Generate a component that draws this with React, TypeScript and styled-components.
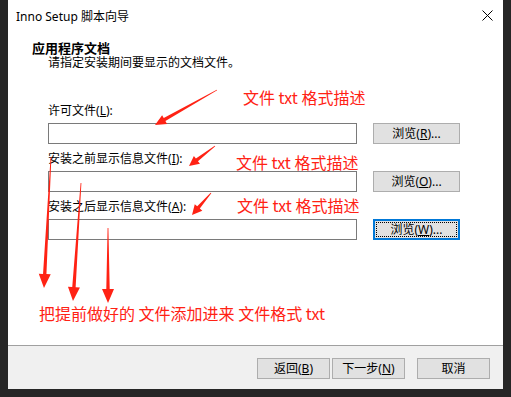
import styled, { createGlobalStyle } from "styled-components";

const GlobalStyle = createGlobalStyle`
	html, body {
		margin: 0;
		height: 100%;
		background: #262626;
	}
	body {
		font-family: "Noto Sans", "Noto Sans CJK SC", sans-serif;
		font-size: 12px;
		color: #000;
	}
`;

const RED = "#ff2214";

interface Arrow {
	from: [number, number];
	to: [number, number];
	head: number;
	half: number;
}

// coordinates are relative to the dialog window
const arrows: Arrow[] = [
	{ from: [209, 90], to: [147, 125], head: 11, half: 5 },
	{ from: [207, 146], to: [181, 166], head: 10, half: 5 },
	{ from: [203, 193], to: [184, 215], head: 10, half: 5 },
	{ from: [43, 157], to: [36, 288], head: 14, half: 6 },
	{ from: [73, 183], to: [65, 301], head: 14, half: 6 },
	{ from: [100, 228], to: [100, 303], head: 14, half: 6 },
];

const arrowPoints = ({ from, to, head, half }: Arrow) => {
	const dx = to[0] - from[0];
	const dy = to[1] - from[1];
	const len = Math.hypot(dx, dy);
	const ux = dx / len;
	const uy = dy / len;
	const nx = -uy;
	const ny = ux;
	const bx = to[0] - ux * head;
	const by = to[1] - uy * head;
	const pts = [
		[from[0] + nx * 0.4, from[1] + ny * 0.4],
		[bx + nx * 1.7, by + ny * 1.7],
		[bx + nx * half, by + ny * half],
		[to[0], to[1]],
		[bx - nx * half, by - ny * half],
		[bx - nx * 1.7, by - ny * 1.7],
		[from[0] - nx * 0.4, from[1] - ny * 0.4],
	];
	return pts.map((p) => p.join(",")).join(" ");
};

const fields = [
	{ label: "许可文件", key: "L", browse: "R", focused: false },
	{ label: "安装之前显示信息文件", key: "I", browse: "O", focused: false },
	{ label: "安装之后显示信息文件", key: "A", browse: "W", focused: true },
];

const notes = [
	{ x: 235, y: 87 },
	{ x: 228, y: 152 },
	{ x: 229, y: 195 },
];

const App: React.FC = () => {
	return (
		<>
			<GlobalStyle />
			<Window>
				<TitleBar>
					<span>Inno Setup 脚本向导</span>
					<Close width="11" height="11" viewBox="0 0 11 11">
						<path d="M0.5 0.5 L10.5 10.5 M10.5 0.5 L0.5 10.5" stroke="#000" strokeWidth="1" />
					</Close>
				</TitleBar>
				<Header>
					<HeaderTitle>应用程序文档</HeaderTitle>
					<HeaderSub>请指定安装期间要显示的文档文件。</HeaderSub>
				</Header>
				<Content>
					{fields.map((f) => (
						<FieldGroup key={f.key}>
							<Label>
								{f.label}(<u>{f.key}</u>):
							</Label>
							<FieldRow>
								<TextBox />
								<Button $wide $focused={f.focused}>
									<ButtonInner $focused={f.focused}>
										浏览(<u>{f.browse}</u>)...
									</ButtonInner>
								</Button>
							</FieldRow>
						</FieldGroup>
					))}
				</Content>
				<Footer>
					<Button>
						返回(<u>B</u>)
					</Button>
					<Button>
						下一步(<u>N</u>)
					</Button>
					<Button $gapLeft>取消</Button>
				</Footer>

				{notes.map((n, i) => (
					<Note key={i} style={{ left: n.x, top: n.y }}>
						文件 txt 格式描述
					</Note>
				))}
				<Note style={{ left: 31, top: 303 }}>把提前做好的 文件添加进来 文件格式 txt</Note>
				<Overlay width="495" height="389">
					{arrows.map((a, i) => (
						<polygon key={i} points={arrowPoints(a)} fill={RED} />
					))}
				</Overlay>
			</Window>
		</>
	);
};

const Window = styled.div`
	position: relative;
	margin-left: 8px;
	width: 495px;
	height: 389px;
	background: #fff;
	display: flex;
	flex-direction: column;
	overflow: hidden;
`;

const TitleBar = styled.div`
	height: 31px;
	flex: none;
	display: flex;
	align-items: center;
	justify-content: space-between;
	padding: 0 10px 0 8px;
	font-size: 12px;
	color: #000;
`;

const Close = styled.svg`
	display: block;
`;

const Header = styled.div`
	padding: 11px 0 0 24px;
	flex: none;
`;

const HeaderTitle = styled.div`
	font-weight: bold;
	font-size: 13px;
	line-height: 13px;
	height: 13px;
`;

const HeaderSub = styled.div`
	margin: 1px 0 0 16px;
	line-height: 13px;
	height: 13px;
`;

const Content = styled.div`
	flex: 1;
	padding: 34px 0 0 40px;
	display: flex;
	flex-direction: column;
	gap: 7px;
`;

const FieldGroup = styled.div`
	display: flex;
	flex-direction: column;
	gap: 4px;
`;

const Label = styled.div`
	line-height: 16px;
	height: 16px;
	u {
		text-decoration-thickness: 1px;
	}
`;

const FieldRow = styled.div`
	display: flex;
	gap: 16px;
	align-items: center;
`;

const TextBox = styled.div`
	width: 309px;
	height: 21px;
	box-sizing: border-box;
	border: 1px solid #7a7a7a;
	background: #fff;
`;

const Button = styled.div<{ $wide?: boolean; $focused?: boolean; $gapLeft?: boolean }>`
	width: ${(p) => (p.$wide ? 87 : 73)}px;
	height: 21px;
	box-sizing: border-box;
	background: #e1e1e1;
	border: ${(p) => (p.$focused ? "2px solid #0078d7" : "1px solid #adadad")};
	display: flex;
	align-items: center;
	justify-content: center;
	font-size: 12px;
	line-height: 1;
	margin-left: ${(p) => (p.$gapLeft ? 10 : 0)}px;
	padding: ${(p) => (p.$focused ? 1 : 0)}px;
`;

const ButtonInner = styled.div<{ $focused?: boolean }>`
	width: 100%;
	height: 100%;
	box-sizing: border-box;
	display: flex;
	align-items: center;
	justify-content: center;
	border: 1px dotted ${(p) => (p.$focused ? "#000" : "transparent")};
`;

const Footer = styled.div`
	flex: none;
	height: 44px;
	box-sizing: border-box;
	border-top: 1px solid #a0a0a0;
	background: #f0f0f0;
	display: flex;
	justify-content: flex-end;
	gap: 2px;
	padding: 12px 13px 0 0;
`;

const Note = styled.div`
	position: absolute;
	color: ${RED};
	font-family: "Noto Sans CJK SC", sans-serif;
	font-size: 16px;
	line-height: 20px;
	white-space: pre;
	pointer-events: none;
`;

const Overlay = styled.svg`
	position: absolute;
	left: 0;
	top: 0;
	pointer-events: none;
`;

export default App;
